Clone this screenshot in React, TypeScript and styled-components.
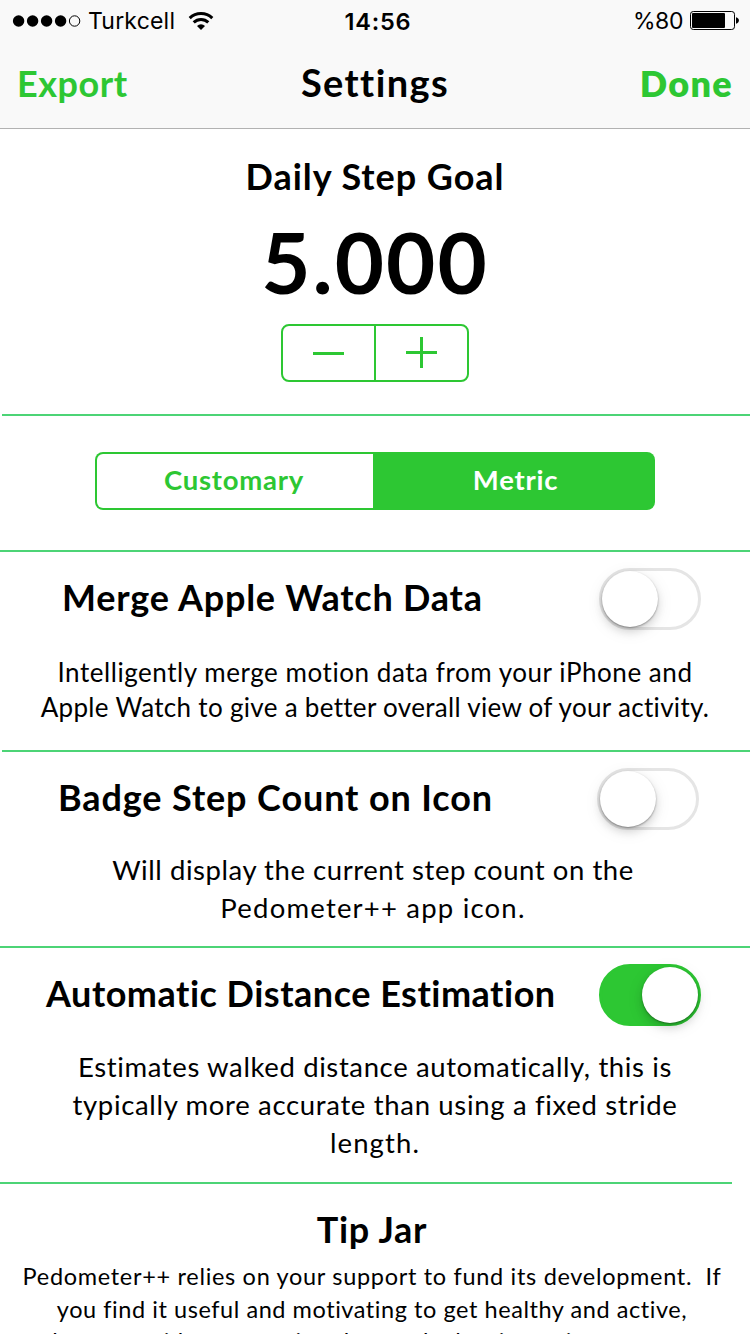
import React, { useState } from "react";
import styled, { createGlobalStyle } from "styled-components";

const GREEN = "#2dc733";
const RULE = "#4cd476";

const GlobalStyle = createGlobalStyle`
  * { box-sizing: border-box; }
  html, body { margin: 0; background: #fff; }
  body {
    font-family: "Lato", "Open Sans", sans-serif;
    color: #000;
    overflow: hidden;
  }
  button { font-family: inherit; margin: 0; padding: 0; background: none; border: 0; }
`;

const Screen = styled.div`
  width: 750px;
  height: 1334px;
  overflow: hidden;
  display: flex;
  flex-direction: column;
  background: #fff;
`;

const Header = styled.header`
  flex: none;
  height: 129px;
  background: #f9f9f9;
  border-bottom: 1px solid #b2b2b2;
`;

const StatusBar = styled.div`
  display: grid;
  grid-template-columns: 1fr auto 1fr;
  align-items: center;
  height: 41px;
  padding: 0 11px 0 12px;
  font-family: "Inter", sans-serif;
  font-size: 23px;
  line-height: 39px;
`;

const StatusGroup = styled.div<{ $end?: boolean }>`
  display: flex;
  align-items: center;
  justify-content: ${(p) => (p.$end ? "flex-end" : "flex-start")};
`;

const Signal = styled.svg`
  flex: none;
  margin-right: 7px;
`;

const StatusText = styled.span`
  padding-top: 2px;
`;

const Carrier = styled(StatusText)`
  letter-spacing: 0.2px;
  margin-right: 13px;
`;

const Clock = styled(StatusText)`
  padding-left: 5px;
  padding-top: 1px;
  font-weight: 600;
  font-size: 23.5px;
  letter-spacing: 0.8px;
`;

const Percent = styled(StatusText)`
  margin-right: 7px;
  letter-spacing: -0.4px;
`;

const NavBar = styled.nav`
  display: grid;
  grid-template-columns: 1fr auto 1fr;
  align-items: start;
  padding: 0 17px 0 17px;
`;

const NavButton = styled.button<{ $strong?: boolean }>`
  justify-self: ${(p) => (p.$strong ? "end" : "start")};
  color: ${GREEN};
  font-size: 36px;
  line-height: 85px;
  font-weight: ${(p) => (p.$strong ? 800 : 700)};
  letter-spacing: ${(p) => (p.$strong ? 1.3 : 0.55)}px;
`;

const NavTitle = styled.h1`
  margin: 0;
  font-size: 38px;
  line-height: 82px;
  font-weight: 700;
  letter-spacing: 1.4px;
`;

const Section = styled.section<{ $height: number }>`
  flex: none;
  height: ${(p) => p.$height}px;
  display: flex;
  flex-direction: column;
  align-items: center;
`;

const Rule = styled.hr<{ $left?: number; $right?: number }>`
  flex: none;
  height: 2px;
  border: 0;
  margin: 0 ${(p) => p.$right ?? 0}px 0 ${(p) => p.$left ?? 0}px;
  background: ${RULE};
`;

const Heading = styled.h2<{ $track: number }>`
  margin: 0;
  font-size: 36px;
  line-height: 44px;
  font-weight: 700;
  white-space: nowrap;
  letter-spacing: ${(p) => p.$track}px;
`;

const GoalSection = styled(Section)`
  padding-top: 25px;
`;

const GoalValue = styled.div`
  margin-top: 13px;
  font-size: 85px;
  line-height: 100px;
  font-weight: 700;
  letter-spacing: 2px;
`;

const Stepper = styled.div`
  display: grid;
  grid-template-columns: 93px 1fr;
  width: 188px;
  height: 58px;
  margin-top: 13px;
  border: 2px solid ${GREEN};
  border-radius: 8px;
`;

const StepButton = styled.button`
  display: flex;
  align-items: flex-start;
  justify-content: center;
  padding-top: 11px;

  &:first-child {
    border-right: 2px solid ${GREEN};
  }
`;

const UnitSection = styled(Section)`
  padding-top: 36px;
`;

const Segmented = styled.div`
  display: grid;
  grid-template-columns: 276px 1fr;
  width: 560px;
  height: 58px;
  padding: 2px;
  border-radius: 8px;
  background: ${GREEN};
`;

const Segment = styled.button<{ $active: boolean }>`
  display: flex;
  justify-content: center;
  font-size: 27.5px;
  line-height: 52px;
  font-weight: 700;
  letter-spacing: 0.75px;
  color: ${(p) => (p.$active ? "#fff" : GREEN)};
  background: ${(p) => (p.$active ? GREEN : "#fff")};

  &:first-child {
    border-radius: 6px 0 0 6px;
    padding-right: 2px;
  }

  &:last-child {
    border-radius: 0 6px 6px 0;
    padding-left: 5px;
  }
`;

const OptionSection = styled(Section)`
  padding-top: 16px;
`;

const OptionRow = styled.div<{ $left: number; $right: number }>`
  flex: none;
  align-self: stretch;
  display: flex;
  justify-content: space-between;
  height: 62px;
  padding: 0 ${(p) => p.$right}px 0 ${(p) => p.$left}px;
`;

const OptionTitle = styled(Heading)`
  line-height: 58px;
`;

const Track = styled.button<{ $on: boolean }>`
  flex: none;
  display: flex;
  align-items: center;
  justify-content: ${(p) => (p.$on ? "flex-end" : "flex-start")};
  width: 102px;
  height: 62px;
  border: 3px solid ${(p) => (p.$on ? GREEN : "#e5e5e5")};
  border-radius: 31px;
  background: ${(p) => (p.$on ? GREEN : "#fff")};
`;

const Knob = styled.span`
  width: 56px;
  height: 56px;
  border-radius: 50%;
  background: #fff;
  box-shadow: 0 1px 2px rgba(0, 0, 0, 0.35), 0 5px 8px rgba(0, 0, 0, 0.13),
    0 4px 18px rgba(0, 0, 0, 0.08);
`;

const Description = styled.p<{
  $size: number;
  $leading: number;
  $gap: number;
  $inset?: number;
}>`
  margin: ${(p) => p.$gap}px 0 0;
  padding-right: ${(p) => p.$inset ?? 0}px;
  display: flex;
  flex-direction: column;
  align-items: center;
  font-size: ${(p) => p.$size}px;
  line-height: ${(p) => p.$leading}px;
`;

const Line = styled.span<{ $track: number }>`
  white-space: pre;
  letter-spacing: ${(p) => p.$track}px;
`;

const TipSection = styled(Section)`
  padding: 23px 6px 0 0;
`;

const TipLastLine = styled(Line)`
  align-self: flex-start;
  margin-left: 16px;
  line-height: 31px;
`;

type LineData = [text: string, track: number];

interface OptionData {
  title: string;
  track: number;
  left: number;
  right: number;
  height: number;
  size: number;
  leading: number;
  gap: number;
  inset?: number;
  on: boolean;
  lines: LineData[];
  rule: { left?: number; right?: number };
}

const OPTIONS: OptionData[] = [
  {
    title: "Merge Apple Watch Data",
    track: 0.77,
    left: 62,
    right: 49,
    height: 198,
    size: 26,
    leading: 35,
    gap: 25,
    on: false,
    lines: [
      ["Intelligently merge motion data from your iPhone and", 0.55],
      ["Apple Watch to give a better overall view of your activity.", 0.31],
    ],
    rule: { left: 2 },
  },
  {
    title: "Badge Step Count on Icon",
    track: 0.88,
    left: 58,
    right: 51,
    height: 194,
    size: 27.5,
    leading: 38,
    gap: 21,
    inset: 4,
    on: false,
    lines: [
      ["Will display the current step count on the", 0.56],
      ["Pedometer++ app icon.", 1.2],
    ],
    rule: {},
  },
  {
    title: "Automatic Distance Estimation",
    track: 0.5,
    left: 46,
    right: 49,
    height: 234,
    size: 27.5,
    leading: 38,
    gap: 22,
    on: true,
    lines: [
      ["Estimates walked distance automatically, this is", 0.62],
      ["typically more accurate than using a fixed stride", 0.67],
      ["length.", 1.1],
    ],
    rule: { right: 18 },
  },
];

function SignalDots() {
  return (
    <Signal width="69" height="14" viewBox="0 0 69 14">
      {[6.6, 20.6, 34.6, 48.6].map((cx) => (
        <circle key={cx} cx={cx} cy="7" r="5.7" />
      ))}
      <circle cx="62.6" cy="7" r="5.2" fill="none" stroke="#000" strokeWidth="1" />
    </Signal>
  );
}

function Wifi() {
  return (
    <svg width="26" height="20" viewBox="0 0 26 20" fill="none" stroke="#000" strokeWidth="3">
      <path d="M1.7 7.1a16.2 16.2 0 0 1 22.6 0" />
      <path d="M5.7 11.4a10.4 10.4 0 0 1 14.6 0" />
      <path d="M13 19l-4-4.1a5.8 5.8 0 0 1 8 0z" fill="#000" stroke="none" />
    </svg>
  );
}

function Battery() {
  return (
    <svg width="49" height="19" viewBox="0 0 49 19">
      <rect x="0.5" y="0.5" width="44" height="18" rx="2.8" fill="none" stroke="#000" />
      <rect x="2" y="2" width="33" height="15" rx="1" />
      <path d="M46 6.3c1.8.4 2.9 1.6 2.9 3.2s-1.1 2.8-2.9 3.2z" />
    </svg>
  );
}

function Toggle({ initial }: { initial: boolean }) {
  const [on, setOn] = useState(initial);
  return (
    <Track $on={on} role="switch" aria-checked={on} onClick={() => setOn(!on)}>
      <Knob />
    </Track>
  );
}

function Option({ data }: { data: OptionData }) {
  return (
    <>
      <OptionSection $height={data.height}>
        <OptionRow $left={data.left} $right={data.right}>
          <OptionTitle $track={data.track}>{data.title}</OptionTitle>
          <Toggle initial={data.on} />
        </OptionRow>
        <Description
          $size={data.size}
          $leading={data.leading}
          $gap={data.gap}
          $inset={data.inset}
        >
          {data.lines.map(([text, track]) => (
            <Line key={text} $track={track}>
              {text}
            </Line>
          ))}
        </Description>
      </OptionSection>
      <Rule $left={data.rule.left} $right={data.rule.right} />
    </>
  );
}

export default function App() {
  const [goal, setGoal] = useState(5000);
  const [unit, setUnit] = useState("Metric");

  return (
    <Screen>
      <GlobalStyle />
      <Header>
        <StatusBar>
          <StatusGroup>
            <SignalDots />
            <Carrier>Turkcell</Carrier>
            <Wifi />
          </StatusGroup>
          <Clock>14:56</Clock>
          <StatusGroup $end>
            <Percent>%80</Percent>
            <Battery />
          </StatusGroup>
        </StatusBar>
        <NavBar>
          <NavButton>Export</NavButton>
          <NavTitle>Settings</NavTitle>
          <NavButton $strong>Done</NavButton>
        </NavBar>
      </Header>

      <GoalSection $height={285}>
        <Heading $track={0.95}>Daily Step Goal</Heading>
        <GoalValue>{goal.toLocaleString("de-DE")}</GoalValue>
        <Stepper>
          <StepButton aria-label="Decrease" onClick={() => setGoal(Math.max(500, goal - 500))}>
            <svg width="31" height="31" viewBox="0 0 31 31" fill={GREEN}>
              <rect y="15" width="31" height="3" />
            </svg>
          </StepButton>
          <StepButton aria-label="Increase" onClick={() => setGoal(goal + 500)}>
            <svg width="31" height="31" viewBox="0 0 31 31" fill={GREEN}>
              <rect y="14" width="31" height="3" />
              <rect x="14" width="3" height="31" />
            </svg>
          </StepButton>
        </Stepper>
      </GoalSection>
      <Rule $left={2} />

      <UnitSection $height={134}>
        <Segmented>
          {["Customary", "Metric"].map((name) => (
            <Segment key={name} $active={unit === name} onClick={() => setUnit(name)}>
              {name}
            </Segment>
          ))}
        </Segmented>
      </UnitSection>
      <Rule />

      {OPTIONS.map((data) => (
        <Option key={data.title} data={data} />
      ))}

      <TipSection $height={150}>
        <Heading $track={0.75}>Tip Jar</Heading>
        <Description $size={23.5} $leading={33} $gap={9}>
          <Line $track={0.69}>
            {"Pedometer++ relies on your support to fund its development.  If"}
          </Line>
          <Line $track={0.56}>you find it useful and motivating to get healthy and active,</Line>
          <TipLastLine $track={0.55}>
            please consider supporting the app by leaving a tip.
          </TipLastLine>
        </Description>
      </TipSection>
    </Screen>
  );
}
